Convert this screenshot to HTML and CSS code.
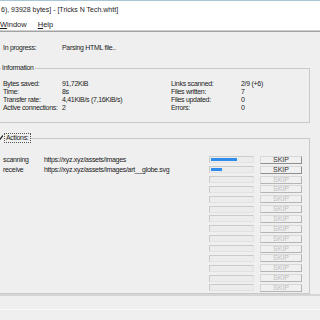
FILE: index.html
```html
<!DOCTYPE html>
<html lang="en">
<head>
  <meta charset="UTF-8" />
  <meta name="viewport" content="width=device-width, initial-scale=1.0" />
  <title>Tricks N Tech - progress</title>
  <link rel="stylesheet" href="styles.css">
</head>
<body>
  <div class="titlebar">
    <div class="title">6), 93928 bytes] - [Tricks N Tech.whtt]</div>
    <div class="menu">
      <span><u>W</u>indow</span>
      <span><u>H</u>elp</span>
    </div>
  </div>
  <div class="sep"></div>

  <div class="status-line">
    <span class="status-label">In progress:</span>
    <span>Parsing HTML file..</span>
  </div>

  <fieldset class="group info">
    <legend>Information</legend>
    <div class="info-grid">
      <span>Bytes saved:</span><span>91,72KiB</span><span>Links scanned:</span><span>2/9 (+6)</span>
      <span>Time:</span><span>8s</span><span>Files written:</span><span>7</span>
      <span>Transfer rate:</span><span>4,41KiB/s (7,16KiB/s)</span><span>Files updated:</span><span>0</span>
      <span>Active connections:</span><span>2</span><span>Errors:</span><span>0</span>
    </div>
  </fieldset>

  <fieldset class="group actions">
    <legend>
      <svg class="check" width="6" height="7" viewBox="0 0 6 7"><path d="M0 3.5 L2 5.5 L6 0.5" fill="none" stroke="#222" stroke-width="1.3"/></svg>
      <span class="focus">Actions:</span>
    </legend>
    <div id="rows"></div>
  </fieldset>

  <div class="statusbar"></div>

  <script>
    const rows = [
      { state: "scanning", url: "https://xyz.xyz/assets/images", done: 64 },
      { state: "receive", url: "https://xyz.xyz/assets/images/art__globe.svg", done: 26 }
    ];
    const rowsElement = document.getElementById("rows");

    for (let i = 0; i < 14; i++) {
      const r = rows[i];
      const item = document.createElement("div");
      item.className = "action-row";
      if (r) {
        item.innerHTML = `<span>${r.state}</span><span>${r.url}</span>` +
          `<div class="bar"><div class="fill" style="width:${r.done}%"></div></div>` +
          `<button class="skip">SKIP</button>`;
      } else {
        item.innerHTML = `<span></span><span></span><div class="bar"></div>` +
          `<button class="skip" disabled>SKIP</button>`;
      }
      rowsElement.appendChild(item);
    }
  </script>
</body>
</html>
```

FILE: styles.css
```css
body {
  margin: 0;
  font-family: 'Liberation Sans', Arial, sans-serif;
  font-size: 7px;
  letter-spacing: -0.3px;
  color: #1c1c1c;
  background: #efefef;
  overflow: hidden;
  height: 320px;
}
.titlebar {
  background: white;
  border-top: 1px solid #a8c6d6;
  padding-top: 3px;
  box-sizing: border-box;
  height: 30px;
}
.title {
  line-height: 12px;
  padding-left: 1px;
  letter-spacing: 0;
  white-space: nowrap;
}
.menu {
  line-height: 10px;
  margin-top: 4px;
  display: flex;
  gap: 11px;
  font-size: 7.5px;
  letter-spacing: 0;
}
.sep {
  border-top: 1px solid #cfcfcf;
  border-bottom: 1px solid #a3a3a3;
}
.status-line {
  margin-top: 11px;
  line-height: 10px;
  padding-left: 3px;
  display: flex;
}
.status-label {
  width: 59px;
}
.group {
  margin: 10px 10px 0 -4px;
  border: 1px solid #c9c9c9;
  padding: 0 7px 0 6px;
  min-width: 0;
}
.group legend {
  padding: 0 1px;
  line-height: 10px;
  margin-left: -2px;
}
.info {
  padding-top: 7px;
  padding-bottom: 10px;
}
.info-grid {
  display: grid;
  grid-template-columns: 59px 109px 70px 1fr;
  grid-auto-rows: 8px;
  line-height: 8px;
}
.actions {
  padding-top: 12px;
  padding-bottom: 0;
}
.actions legend {
  margin-left: -6px;
  display: flex;
  align-items: center;
  gap: 1px;
  padding: 0;
}
.check {
  display: block;
}
.focus {
  border: 1px dotted #555;
  line-height: 8px;
  padding: 0 1px;
}
.action-row {
  display: grid;
  grid-template-columns: 41px 1fr 45px 48px;
  height: 9.85px;
  line-height: 9px;
  align-items: center;
  white-space: nowrap;
}
.bar {
  height: 7px;
  box-sizing: border-box;
  border: 1px solid #cbcbcb;
  border-right-color: #e2e2e2;
  border-bottom-color: #e2e2e2;
  background: #ececec;
  padding: 1px;
}
.fill {
  height: 100%;
  background: #2f8cec;
}
.skip {
  justify-self: end;
  width: 42px;
  height: 8px;
  box-sizing: border-box;
  padding: 0;
  margin: 0;
  font-family: inherit;
  font-size: 7px;
  line-height: 6px;
  letter-spacing: 0;
  color: #333;
  background: #f0f0f0;
  border: 1px solid #d8d8d8;
  border-right-color: #8e8e8e;
  border-bottom-color: #8e8e8e;
  border-radius: 0;
}
.skip:disabled {
  color: #bdbdbd;
  border-right-color: #b4b4b4;
  border-bottom-color: #b4b4b4;
}
.statusbar {
  border-top: 2px solid #d5d5d5;
  border-bottom: 1px solid #fafafa;
  height: 13px;
}
```
